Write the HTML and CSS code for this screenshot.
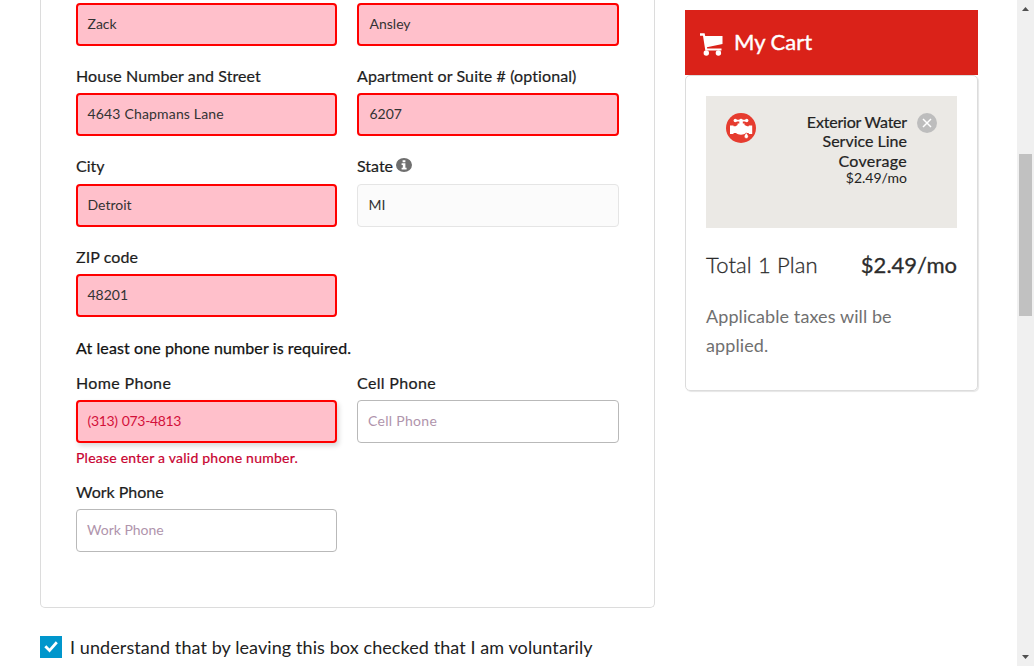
FILE: index.html
```html
<!DOCTYPE html>
<html lang="en">
<head>
<meta charset="utf-8">
<title>Checkout</title>
<link rel="stylesheet" href="styles.css">
</head>
<body>
<div class="window">
  <div class="page">
    <main class="main">
      <form class="card">
        <div class="grid">
          <div class="field"><div class="input invalid"><span>Zack</span></div></div>
          <div class="field"><div class="input invalid right"><span>Ansley</span></div></div>
          <div class="field"><label class="label"><span class="spaced">House Number and Street</span></label><div class="input invalid"><span class="t-street">4643 Chapmans Lane</span></div></div>
          <div class="field"><label class="label"><span class="spaced">Apartment or Suite # (optional)</span></label><div class="input invalid right"><span>6207</span></div></div>
          <div class="field"><label class="label raised"><span>City</span></label><div class="input invalid"><span>Detroit</span></div></div>
          <div class="field"><label class="label raised"><span>State</span><svg class="info" viewBox="0 0 16 14"><ellipse cx="8" cy="7" rx="8" ry="7" fill="#6f6f6f"/><path d="M6.600 2.200h2.800v2H6.600zM5.600 5.200h3.800v4.500h1.200v1.700H5.600V9.700h1.200V6.900H5.600z" fill="#fff"/></svg></label><div class="input disabled"><span>MI</span></div></div>
          <div class="field"><label class="label"><span class="spaced">ZIP code</span></label><div class="input invalid"><span>48201</span></div></div>
        </div>
        <p class="note"><span class="spaced">At least one phone number is required.</span></p>
        <div class="grid phones">
          <div class="field"><label class="label"><span class="wide">Home Phone</span></label><div class="input invalid focused"><span class="t-phone">(313) 073-4813</span></div><p class="error"><span>Please enter a valid phone number.</span></p></div>
          <div class="field"><label class="label"><span class="wide">Cell Phone</span></label><div class="input"><span class="placeholder t-cell">Cell Phone</span></div></div>
          <div class="field"><label class="label"><span>Work Phone</span></label><div class="input"><span class="placeholder">Work Phone</span></div></div>
        </div>
      </form>
      <div class="consent">
        <span class="checkbox"><svg viewBox="0 0 22 22"><path d="M4.300 11.200l2-2 3.200 3.200L15.800 5.200l2 2-8.200 9.200z" fill="#fff"/></svg></span>
        <span class="consent-text">I understand that by leaving this box checked that I am voluntarily</span>
      </div>
    </main>
    <aside class="cart">
      <header class="cart-head">
        <svg class="cart-icon" viewBox="0 0 23 23"><path d="M0 .3h4.600l.6 2.600H22.500v8L6.900 14.200l.3 1.300H21.500v2H5.300L3 2.700H0z" fill="#fff"/><circle cx="6.300" cy="20" r="2.700" fill="#fff"/><circle cx="18.400" cy="20" r="2.700" fill="#fff"/></svg>
        <span class="cart-title">My Cart</span>
      </header>
      <div class="cart-body">
        <div class="item">
          <svg class="valve" viewBox="0 0 30 30"><circle cx="15" cy="15" r="15" fill="#e63c2f"/><g fill="#fff"><circle cx="9.300" cy="7.500" r="1.700"/><circle cx="20.700" cy="7.500" r="1.700"/><path d="M9 6.800h4.200a2 1.700 0 0 1 3.600 0H21V8.500h-4.200v2h1.700v1.400l2.700 1.300h1.600v-.7H26.200v8.500h-3.400v-1H20c-2.300 2.200-7.700 2.200-10 0H7.500v1H4v-8.500h3.500v.7h2.100l2-1.300v-1.400h1.700V8.500H9z"/><path d="M20.300 19.700c1 1.600 2 2.600 2 3.800a2 2 0 0 1-4 0c0-1.200 1-2.200 2-3.800z" stroke="#e63c2f" stroke-width=".5"/></g></svg>
          <div class="item-text"><div class="item-name"><span class="t-exterior">Exterior Water</span><br><span>Service Line</span><br><span class="t-coverage">Coverage</span></div><div class="item-price">$2.49/mo</div></div>
          <svg class="remove" viewBox="0 0 20 20"><circle cx="10" cy="10" r="10" fill="#bdbdbd"/><path d="M6 6l8 8M14 6l-8 8" stroke="#fff" stroke-width="1.500"/></svg>
        </div>
        <div class="total"><span class="total-label">Total 1 Plan</span><span class="total-price">$2.49/mo</span></div>
        <p class="taxes">Applicable taxes will be<br>applied.</p>
      </div>
    </aside>
  </div>
  <div class="scrollbar">
    <svg class="arrow" viewBox="0 0 17 17"><path d="M5 11h7L8.500 7z" fill="#505050"/></svg>
    <div class="thumb"></div>
    <svg class="arrow arrow-down" viewBox="0 0 17 17"><path d="M5 6h7L8.500 10z" fill="#505050"/></svg>
  </div>
</div>
</body>
</html>
```
FILE: styles.css
```css
* { box-sizing: border-box; }
body { margin: 0; background: #fff; color: #222; font-family: Lato, "Open Sans", sans-serif; font-size: 16px; overflow: hidden; }
p { margin: 0; }
svg { display: block; flex: none; }
span { white-space: nowrap; }
.window { display: flex; height: 666px; overflow: hidden; }
.page { flex: 1; display: flex; align-items: flex-start; gap: 30px; padding-left: 40px; }
.main { width: 615px; }
.card { height: 608px; padding: 3px 35px 0; border: 1px solid #dcdcdc; border-top: 0; border-radius: 0 0 5px 5px; }
.grid { display: grid; grid-template-columns: 261px 262px; column-gap: 20px; row-gap: 19.4px; }
.phones { row-gap: 12px; }
.label { display: flex; align-items: center; height: 24px; margin-bottom: 4px; padding-bottom: 3px; color: #1d1d1d; -webkit-text-stroke: .2px; }
.raised { padding-bottom: 4px; }
.info { width: 16px; height: 14px; margin: -2px 0 0 3px; }
.spaced { letter-spacing: .1px; }
.wide { letter-spacing: .35px; }
.t-street { letter-spacing: .17px; }
.t-phone { letter-spacing: -.35px; word-spacing: 1px; }
.t-cell { letter-spacing: .3px; }
.input { display: flex; align-items: center; height: 43px; padding: 0 10px 2px; border: 1px solid #b9b9b9; border-radius: 4px; font-size: 14px; color: #333; background: #fff; }
.invalid { padding-left: 9.5px; border: 2px solid #f00; background: #ffc0cb; }
.right { padding-left: 10.5px; }
.disabled { border-color: #e5e5e5; background: #fbfbfb; padding-left: 10.5px; }
.focused { color: #d3103a; box-shadow: 2px 3px 5px rgba(0, 0, 0, .15); }
.placeholder { color: #b094ac; }
.note { height: 24px; margin: 20px 0 10.8px; line-height: 22px; color: #111; -webkit-text-stroke: .25px; }
.error { height: 20px; margin: 5px 0 1px; line-height: 20px; font-size: 14px; letter-spacing: .24px; color: #c8002f; -webkit-text-stroke: .2px; }
.consent { display: flex; align-items: center; gap: 8px; margin-top: 28px; height: 22px; font-size: 18px; letter-spacing: .085px; }
.checkbox { width: 22px; height: 22px; background: #0096cc; }
.cart { width: 293px; margin-top: 10px; }
.cart-head { display: flex; align-items: center; height: 65px; padding-left: 15px; background: #da2219; color: #fff; font-size: 22px; }
.cart-icon { width: 23px; height: 23px; margin: 4px 11px 0 0; }
.cart-title { padding-bottom: 2px; -webkit-text-stroke: .4px; }
.cart-body { height: 316px; padding: 20px; border: 1px solid #dcdcdc; border-radius: 5px; box-shadow: 1px 1px 1px rgba(0, 0, 0, .1); }
.item { display: flex; align-items: flex-start; height: 132px; padding: 17px 20px; background: #ebe9e5; }
.valve { width: 30px; height: 30px; }
.item-text { flex: 1; margin-top: -1px; text-align: right; }
.item-name { line-height: 19.4px; color: #222; -webkit-text-stroke: .2px; }
.t-exterior { letter-spacing: -.2px; }
.t-coverage { letter-spacing: .3px; }
.item-price { padding-top: 1px; font-size: 14px; line-height: 14px; }
.remove { width: 20px; height: 20px; margin-left: 10px; }
.total { display: flex; justify-content: space-between; align-items: center; height: 32px; margin-top: 20px; font-size: 22px; color: #2c2c2c; }
.total-label { font-weight: 300; -webkit-text-stroke: .3px; letter-spacing: .15px; }
.total-price { -webkit-text-stroke: .3px; }
.taxes { margin-top: 22px; line-height: 29px; font-size: 18px; letter-spacing: .09px; color: #707070; }
.scrollbar { display: flex; flex-direction: column; width: 17px; background: #f0f0f0; }
.arrow { width: 17px; height: 17px; }
.thumb { width: 13px; height: 162px; margin: 137px 0 0 2px; background: #c1c1c1; }
.arrow-down { margin-top: auto; }
```
